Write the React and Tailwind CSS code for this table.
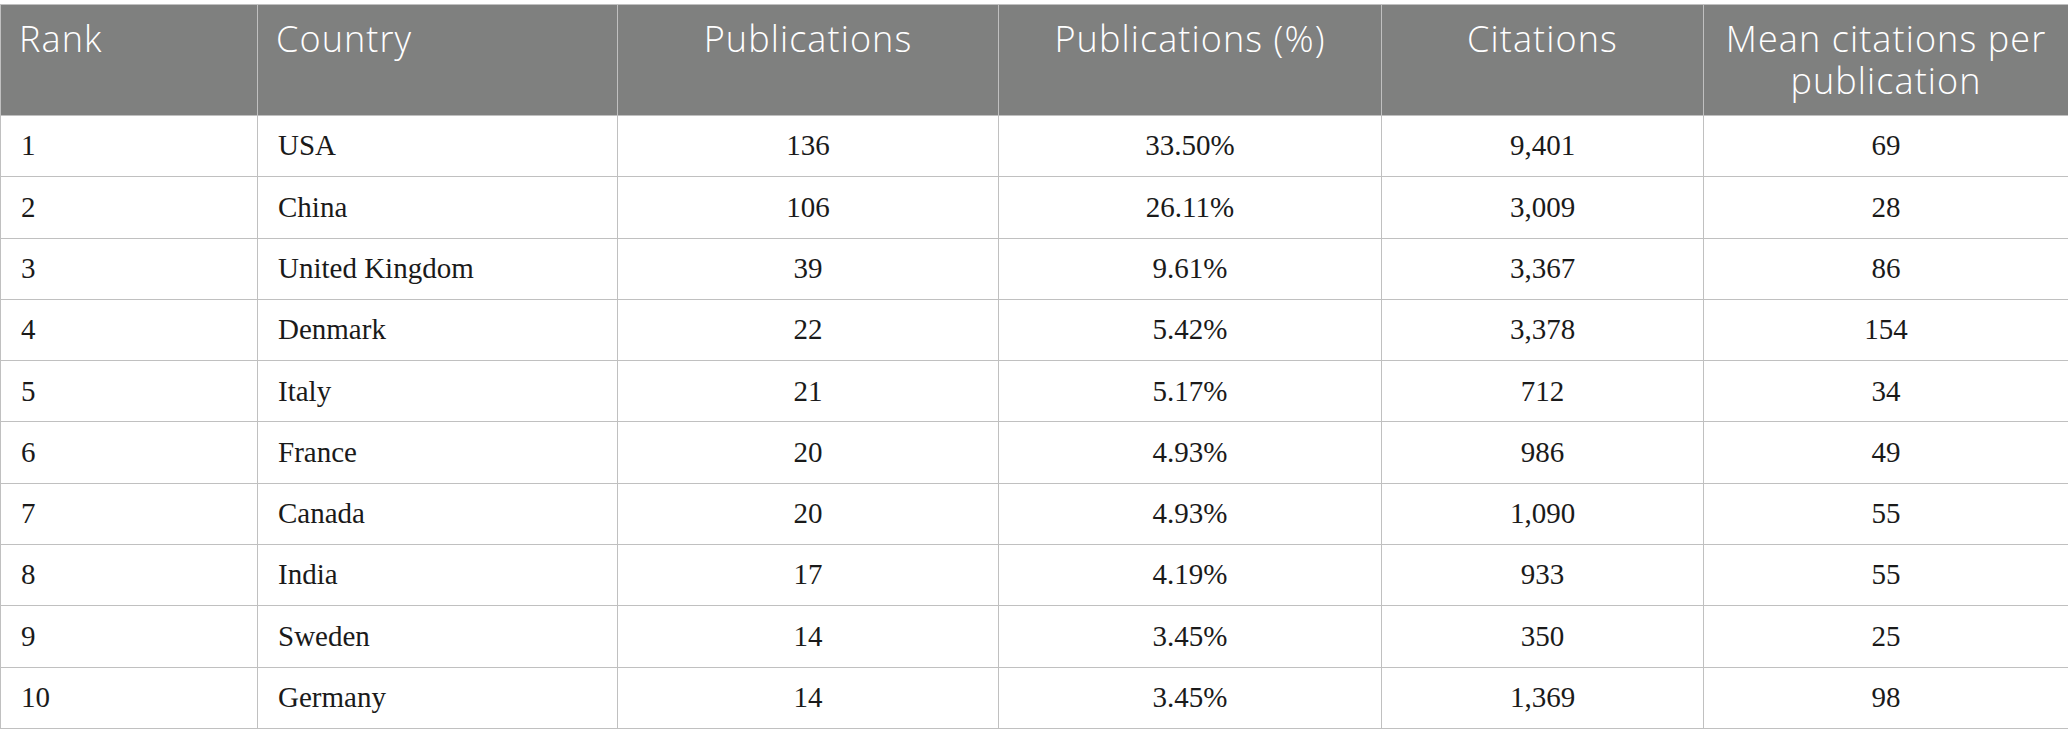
const rows = [
  ['1', 'USA', '136', '33.50%', '9,401', '69'],
  ['2', 'China', '106', '26.11%', '3,009', '28'],
  ['3', 'United Kingdom', '39', '9.61%', '3,367', '86'],
  ['4', 'Denmark', '22', '5.42%', '3,378', '154'],
  ['5', 'Italy', '21', '5.17%', '712', '34'],
  ['6', 'France', '20', '4.93%', '986', '49'],
  ['7', 'Canada', '20', '4.93%', '1,090', '55'],
  ['8', 'India', '17', '4.19%', '933', '55'],
  ['9', 'Sweden', '14', '3.45%', '350', '25'],
  ['10', 'Germany', '14', '3.45%', '1,369', '98'],
];

const headers = [
  { label: 'Rank', align: 'text-left' },
  { label: 'Country', align: 'text-left' },
  { label: 'Publications', align: 'text-center' },
  { label: 'Publications (%)', align: 'text-center' },
  { label: 'Citations', align: 'text-center' },
  { label: 'Mean citations per publication', align: 'text-center' },
];

export default function App() {
  return (
    <div className="w-[2068px] h-[747px] bg-white pt-[4px]">
      <table className="w-[2068px] border-collapse table-fixed">
        <colgroup>
          <col className="w-[257px]" />
          <col className="w-[360px]" />
          <col className="w-[381px]" />
          <col className="w-[383px]" />
          <col className="w-[322px]" />
          <col className="w-[365px]" />
        </colgroup>
        <thead>
          <tr className="bg-[#7f807f] h-[111px]">
            {headers.map((h) => (
              <th
                key={h.label}
                className={`${h.align} align-top border border-[#c0c0c0] px-[18px] pt-[13px] pb-[13px] text-white text-[36px] leading-[42px] tracking-[1.1px] font-light font-['Open_Sans',sans-serif]`}
              >
                {h.label}
              </th>
            ))}
          </tr>
        </thead>
        <tbody>
          {rows.map((r) => (
            <tr key={r[0]} className="h-[61.3px]">
              {r.map((c, i) => (
                <td
                  key={i}
                  className={`${i < 2 ? 'text-left' : 'text-center'} border border-[#c0c0c0] px-[20px] py-0 align-middle text-[29px] text-[#1a1a1a] font-['Liberation_Serif',serif]`}
                >
                  {c}
                </td>
              ))}
            </tr>
          ))}
        </tbody>
      </table>
    </div>
  );
}
